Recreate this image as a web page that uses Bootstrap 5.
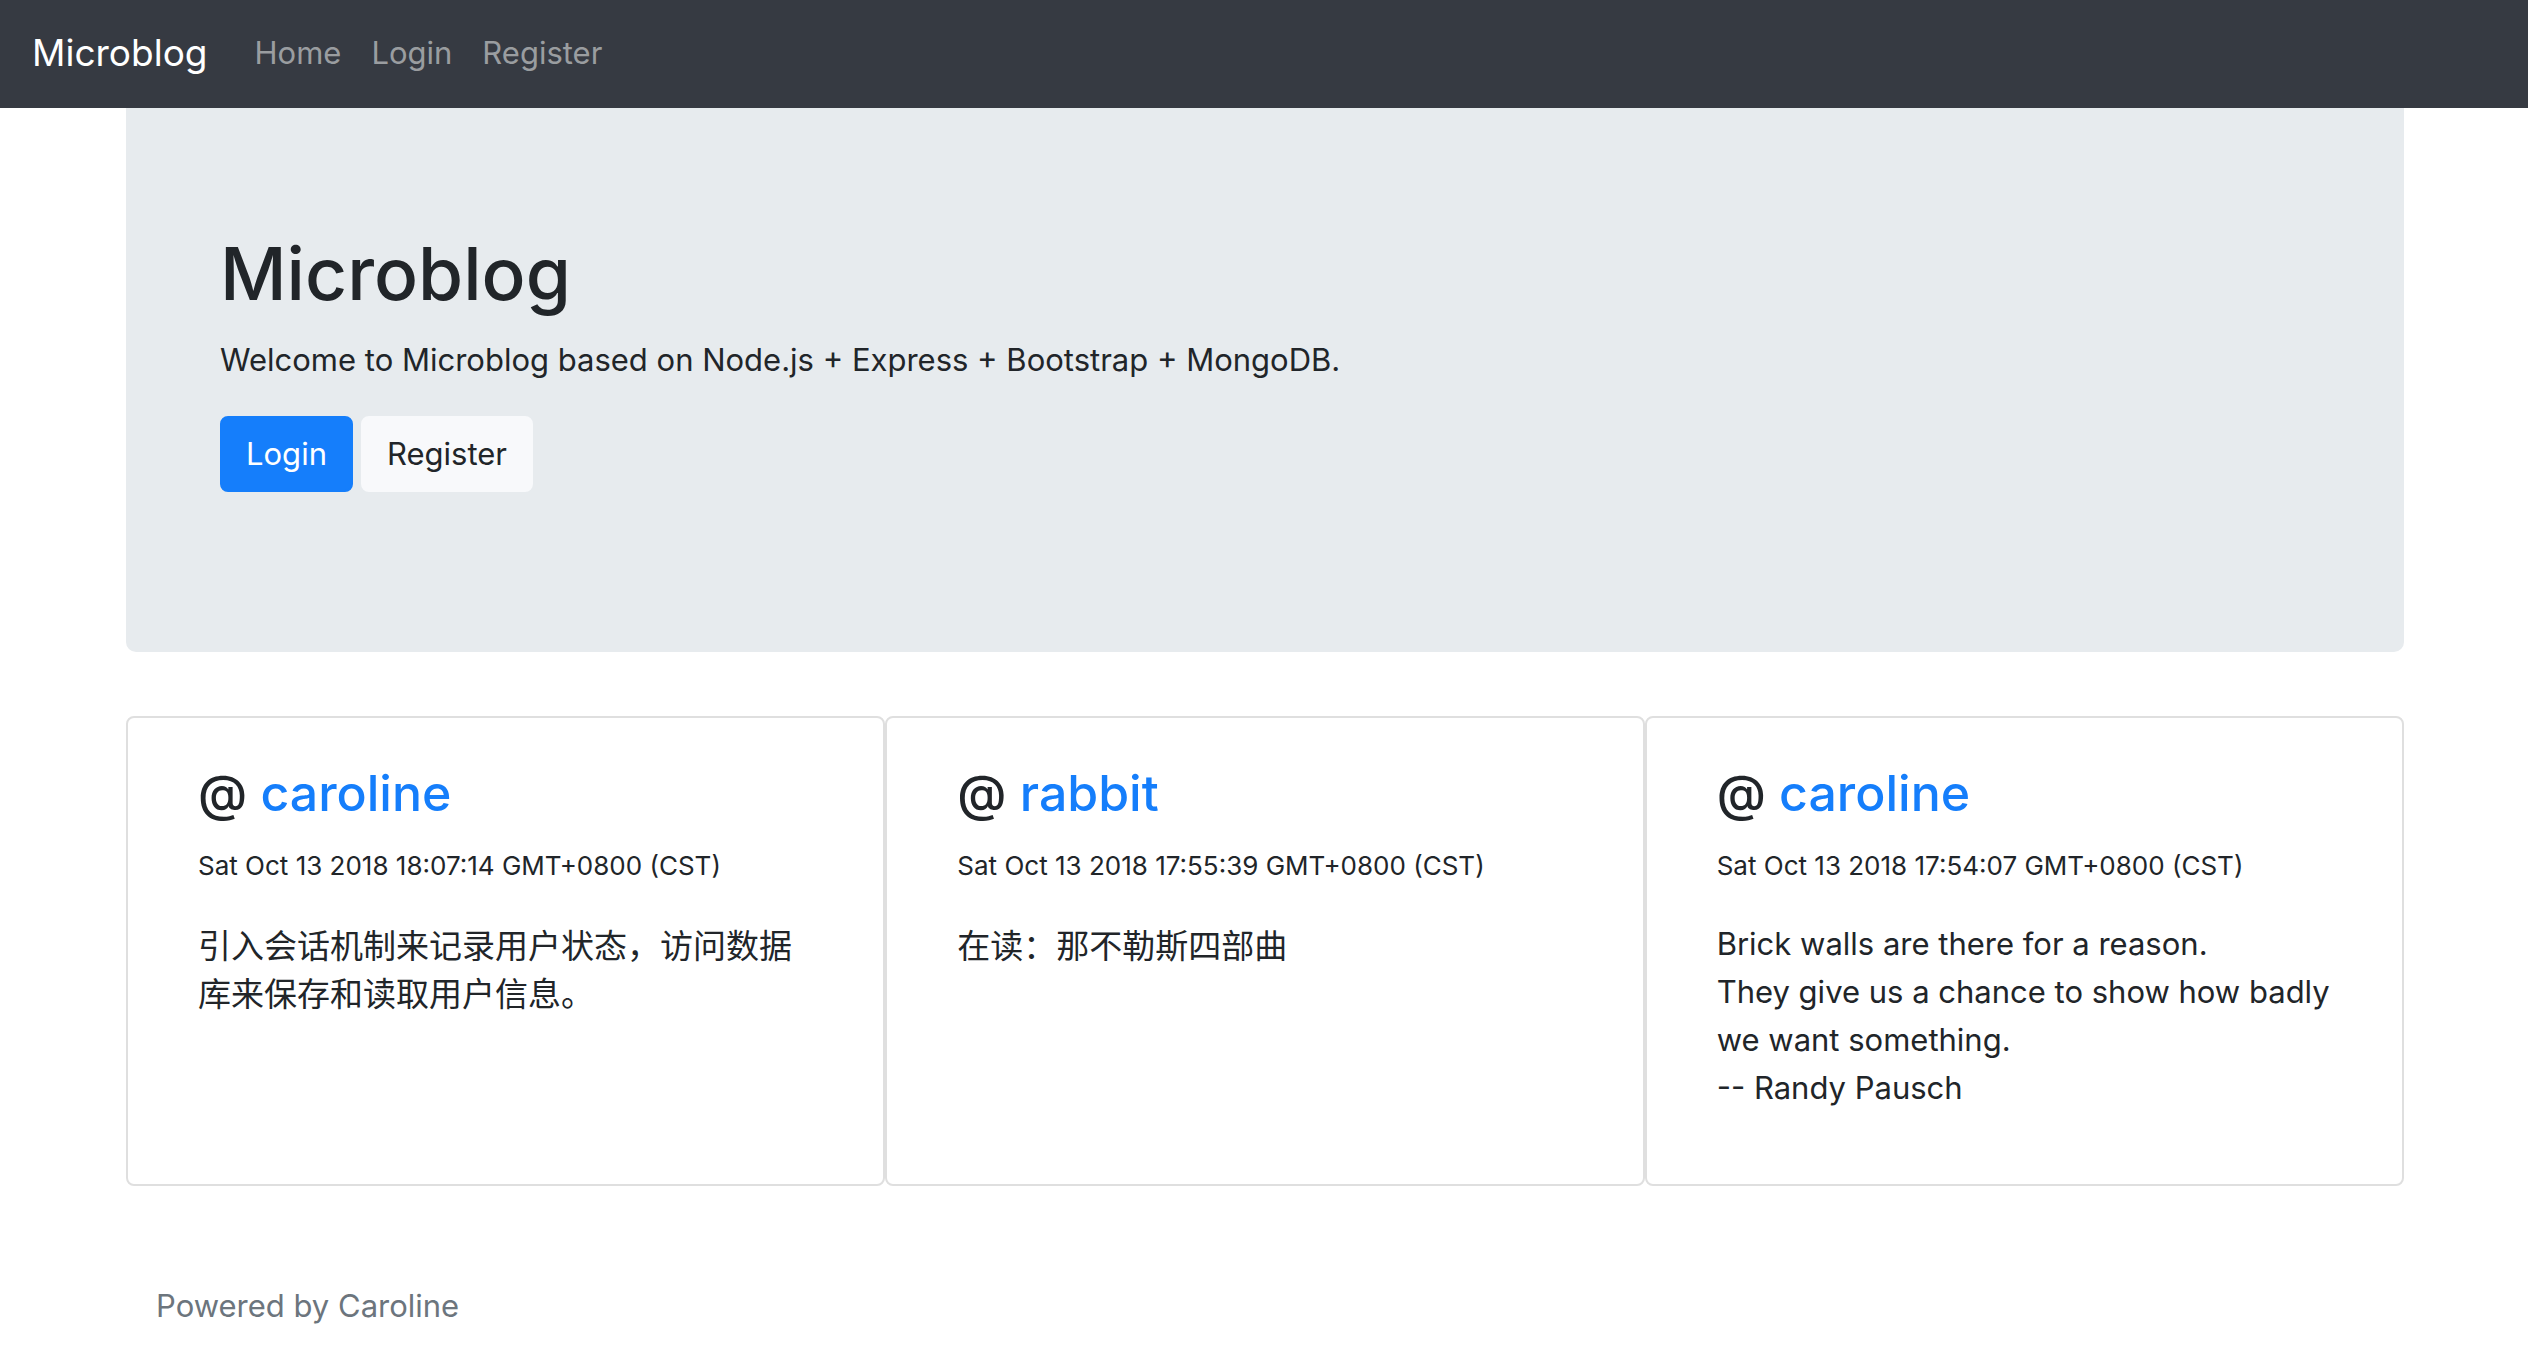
<!DOCTYPE html>
<html lang="en">
<head>
<meta charset="utf-8">
<meta name="viewport" content="width=device-width, initial-scale=1">
<title>Microblog</title>
<link href="https://cdn.jsdelivr.net/npm/bootstrap@5.3.0/dist/css/bootstrap.min.css" rel="stylesheet">
<style>
  body { padding-top: 96px; font-family: Inter, "Noto Sans CJK SC", sans-serif; font-size: 31px; line-height: 48px; color: #212529; background: #fff; }
  a { color: #157efb; text-decoration: none; }
  .site-nav { padding: 13px 32px 15px; background: #363a42; }
  .site-nav .navbar-brand { margin-right: 32px; padding: 10px 0; font-size: 37px; line-height: 60px; color: #fff; }
  .site-nav .navbar-nav .nav-link { padding: 16px 15px; line-height: 48px; color: #9a9da0; }
  .page-wrap { padding: 0 124px 0 126px; }
  .hero { padding: 128px 94px 160px; margin-bottom: 64px; background: #e7ebee; border-radius: 10px; }
  .hero h1 { margin-bottom: 12px; font-size: 73px; line-height: 100px; }
  .hero p { margin-bottom: 32px; }
  .hero .btn { padding: 12px 24px; border-width: 2px; border-radius: 8px; font-size: 31px; line-height: 48px; }
  .btn-login { background: #157efb; border-color: #157efb; color: #fff; }
  .btn-register { background: #f8f9fb; border-color: #f8f9fb; color: #212529; }
  .post { padding: 40px 70px; border: 2px solid #dfdfdf; border-radius: 8px; }
  .post h3 { margin-bottom: 12px; font-size: 50px; line-height: 70px; }
  .post p { margin-bottom: 32px; }
  .post p:lang(zh) { font-size: 33px; font-family: "Noto Sans CJK SC", sans-serif; }
  .post .post-date { margin-bottom: 28px; font-size: 26px; line-height: 52px; }
  .site-foot { padding: 96px 30px 34px; color: #6c757d; }
</style>
</head>
<body>
<nav class="navbar navbar-expand fixed-top site-nav">
  <a class="navbar-brand" href="#">Microblog</a>
  <ul class="navbar-nav">
    <li class="nav-item"><a class="nav-link" href="#">Home</a></li>
    <li class="nav-item"><a class="nav-link" href="#">Login</a></li>
    <li class="nav-item"><a class="nav-link" href="#">Register</a></li>
  </ul>
</nav>
<div class="page-wrap">
  <header class="hero">
    <h1>Microblog</h1>
    <p>Welcome to Microblog based on Node.js + Express + Bootstrap + MongoDB.</p>
    <div class="d-flex gap-2">
      <button type="button" class="btn btn-login">Login</button>
      <button type="button" class="btn btn-register">Register</button>
    </div>
  </header>
  <main class="row g-0">
    <article class="col-4 post">
      <h3>@ <a href="#">caroline</a></h3>
      <p class="post-date"><time>Sat Oct 13 2018 18:07:14 GMT+0800 (CST)</time></p>
      <p lang="zh-CN">引入会话机制来记录用户状态，访问数据库来保存和读取用户信息。</p>
    </article>
    <article class="col-4 post">
      <h3>@ <a href="#">rabbit</a></h3>
      <p class="post-date"><time>Sat Oct 13 2018 17:55:39 GMT+0800 (CST)</time></p>
      <p lang="zh-CN">在读：那不勒斯四部曲</p>
    </article>
    <article class="col-4 post">
      <h3>@ <a href="#">caroline</a></h3>
      <p class="post-date"><time>Sat Oct 13 2018 17:54:07 GMT+0800 (CST)</time></p>
      <p>Brick walls are there for a reason.<br>They give us a chance to show how badly we want something.<br>-- Randy Pausch</p>
    </article>
  </main>
  <footer class="site-foot">Powered by Caroline</footer>
</div>
<script src="https://cdn.jsdelivr.net/npm/bootstrap@5.3.0/dist/js/bootstrap.bundle.min.js"></script>
</body>
</html>
